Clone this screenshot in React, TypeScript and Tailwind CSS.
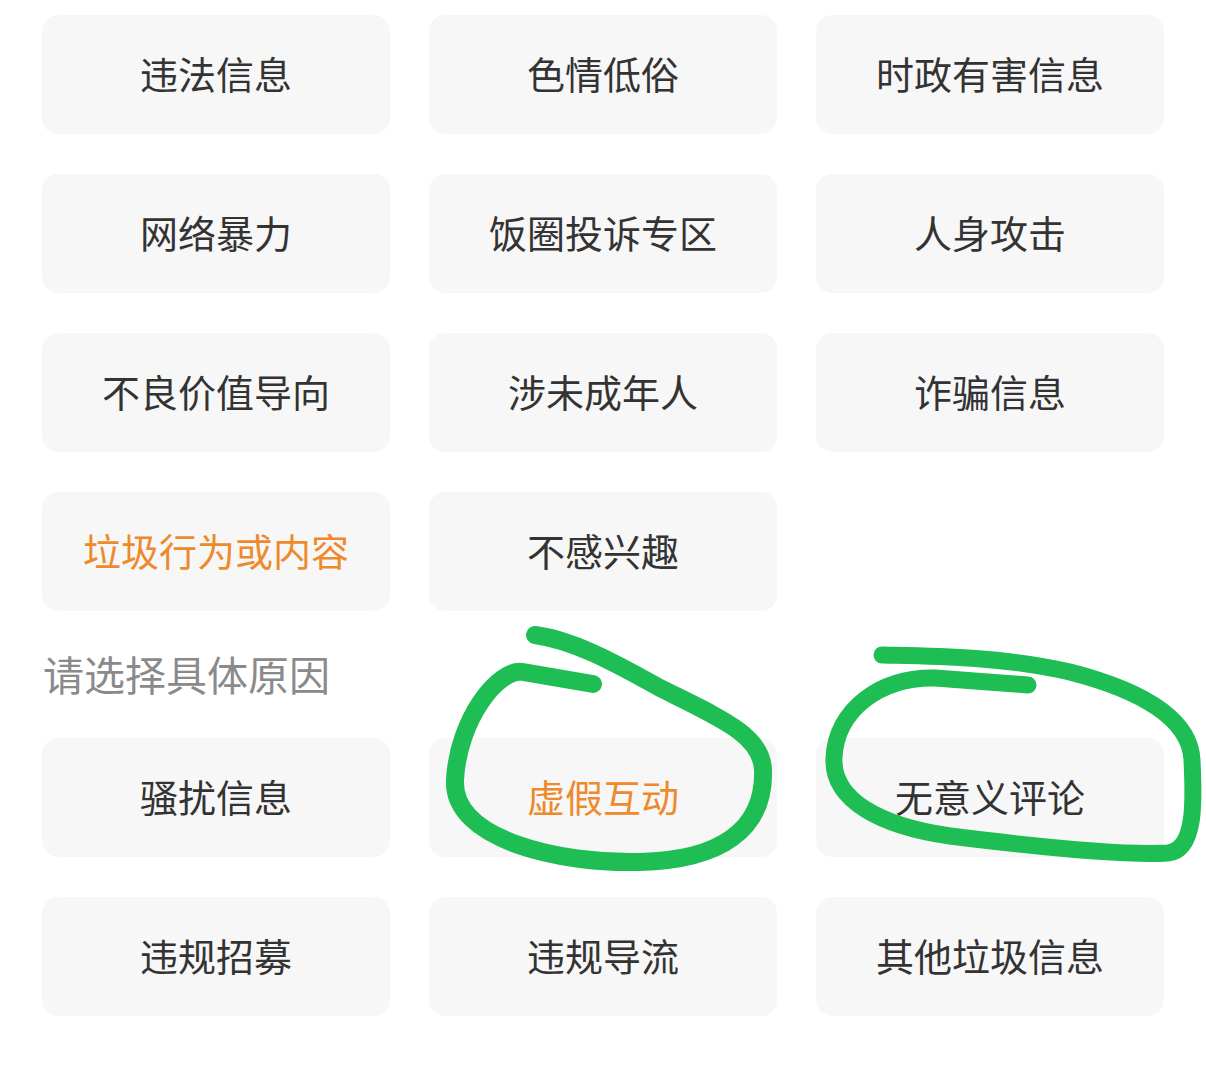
import React from "react";

type Reason = { label: string; active?: boolean };

const topReasons: Reason[] = [
  { label: "违法信息" },
  { label: "色情低俗" },
  { label: "时政有害信息" },
  { label: "网络暴力" },
  { label: "饭圈投诉专区" },
  { label: "人身攻击" },
  { label: "不良价值导向" },
  { label: "涉未成年人" },
  { label: "诈骗信息" },
  { label: "垃圾行为或内容", active: true },
  { label: "不感兴趣" },
];

const detailReasons: Reason[] = [
  { label: "骚扰信息" },
  { label: "虚假互动", active: true },
  { label: "无意义评论" },
  { label: "违规招募" },
  { label: "违规导流" },
  { label: "其他垃圾信息" },
];

function ReasonButton({ reason }: { reason: Reason }) {
  return (
    <button
      type="button"
      className={`flex h-[119px] items-center justify-center rounded-[16px] bg-[#f7f7f7] pb-[3px] text-[38px] leading-none ${
        reason.active ? "text-[#ee8a2c]" : "text-[#333333]"
      }`}
    >
      {reason.label}
    </button>
  );
}

function ReasonGrid({ items }: { items: Reason[] }) {
  return (
    <div className="grid grid-cols-3 gap-x-[39px] gap-y-[40px]">
      {items.map((item) => (
        <ReasonButton key={item.label} reason={item} />
      ))}
    </div>
  );
}

export default function App() {
  return (
    <div
      className="relative h-[1085px] w-[1206px] overflow-hidden bg-white px-[42px] pt-[15px]"
      style={{ fontFamily: '"Noto Sans CJK SC", "Noto Sans", sans-serif' }}
    >
      <ReasonGrid items={topReasons} />
      <div className="flex h-[127px] items-center pb-[3px] pl-[1px] text-[41px] leading-none text-[#8a8a8a]">
        请选择具体原因
      </div>
      <ReasonGrid items={detailReasons} />

      {/* hand-drawn annotation marks */}
      <svg
        className="pointer-events-none absolute left-0 top-0"
        width="1206"
        height="1085"
        viewBox="0 0 1206 1085"
        fill="none"
      >
        <path
          d="M593 684 L 523 672 C 498 668, 458 720, 455 780 C 452 840, 560 864, 640 862 C 720 860, 765 830, 763 770 C 762 735, 720 718, 660 688 C 610 660, 572 640, 535 635"
          stroke="#1fbe55"
          strokeWidth="18"
          strokeLinecap="round"
          strokeLinejoin="round"
        />
        <path
          d="M1028 685 L 935 678 C 880 677, 836 710, 834 758 C 832 800, 880 826, 950 836 C 1030 846, 1120 856, 1168 853 C 1196 850, 1194 800, 1192 760 C 1190 718, 1140 690, 1070 672 C 1000 656, 930 656, 882 655"
          stroke="#1fbe55"
          strokeWidth="17"
          strokeLinecap="round"
          strokeLinejoin="round"
        />
      </svg>
    </div>
  );
}
